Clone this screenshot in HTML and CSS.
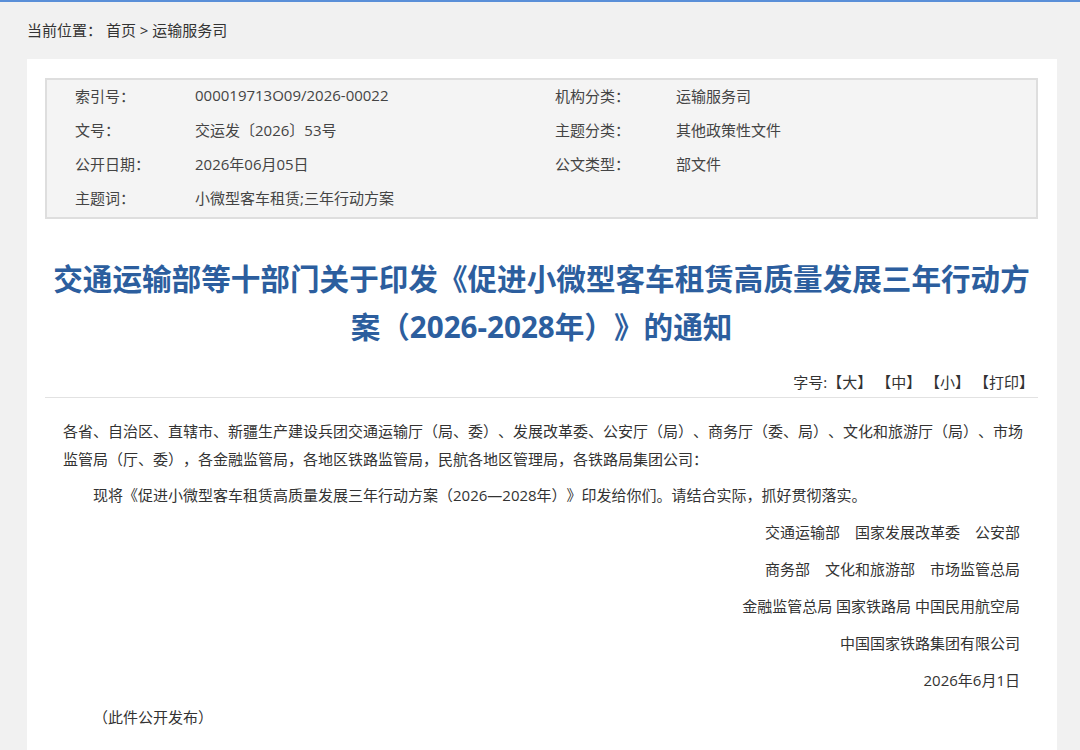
FILE: index.html
```html
<!DOCTYPE html>
<html lang="zh-CN">
  <head>
    <meta charset="UTF-8" />
    <meta name="viewport" content="width=device-width, initial-scale=1.0" />
    <title>交通运输部等十部门关于印发《促进小微型客车租赁高质量发展三年行动方案（2026-2028年）》的通知</title>
    <link rel="stylesheet" href="styles.css">
  </head>
  <body>
    <!-- Breadcrumb -->
    <div class="crumb">
      <span class="crumb-label">当前位置：</span>
      <a href="#">首页</a> &gt; <a href="#">运输服务司</a>
    </div>

    <div class="panel">
      <!-- Document Info Table -->
      <div class="info">
        <div class="info-row">
          <span class="info-label">索引号：</span>
          <span class="info-value">000019713O09/2026-00022</span>
          <span class="info-label">机构分类：</span>
          <span class="info-value">运输服务司</span>
        </div>
        <div class="info-row">
          <span class="info-label">文号：</span>
          <span class="info-value">交运发〔2026〕53号</span>
          <span class="info-label">主题分类：</span>
          <span class="info-value">其他政策性文件</span>
        </div>
        <div class="info-row">
          <span class="info-label">公开日期：</span>
          <span class="info-value">2026年06月05日</span>
          <span class="info-label">公文类型：</span>
          <span class="info-value">部文件</span>
        </div>
        <div class="info-row">
          <span class="info-label">主题词：</span>
          <span class="info-value">小微型客车租赁;三年行动方案</span>
          <span class="info-label"></span>
          <span class="info-value"></span>
        </div>
      </div>

      <!-- Title -->
      <h1 class="doc-title">交通运输部等十部门关于印发《促进小微型客车租赁高质量发展三年行动方案（2026-2028年）》的通知</h1>

      <div class="tools">
        字号:<a href="#">【大】</a> <a href="#">【中】</a> <a href="#">【小】</a> <a href="#">【打印】</a>
      </div>

      <!-- Article Body -->
      <div class="article">
        <p>各省、自治区、直辖市、新疆生产建设兵团交通运输厅（局、委）、发展改革委、公安厅（局）、商务厅（委、局）、文化和旅游厅（局）、市场监管局（厅、委），各金融监管局，各地区铁路监管局，民航各地区管理局，各铁路局集团公司：</p>
        <p class="indent">现将《促进小微型客车租赁高质量发展三年行动方案（2026—2028年）》印发给你们。请结合实际，抓好贯彻落实。</p>

        <div class="signers">
          <p>交通运输部&emsp;国家发展改革委&emsp;公安部</p>
          <p>商务部&emsp;文化和旅游部&emsp;市场监管总局</p>
          <p>金融监管总局 国家铁路局 中国民用航空局</p>
          <p>中国国家铁路集团有限公司</p>
          <p>2026年6月1日</p>
        </div>
        <p class="note">（此件公开发布）</p>
      </div>
    </div>
  </body>
</html>
```

FILE: styles.css
```css
/* Page */
body {
  margin: 0;
  background-color: #f1f1f1;
  border-top: 2px solid #5a8fd8;
  font-family: "Open Sans", "Noto Sans CJK SC", sans-serif;
  font-size: 15px;
  color: #333;
  text-spacing-trim: space-all;
}

a {
  color: inherit;
  text-decoration: none;
}

/* Breadcrumb */
.crumb {
  height: 57px;
  line-height: 56px;
  padding-left: 27px;
  color: #333;
}

/* White content panel */
.panel {
  width: 993px;
  margin-left: 27px;
  padding: 19px 19px 0 18px;
  background-color: #fff;
  min-height: 700px;
}

/* Info table */
.info {
  background-color: #f4f4f4;
  border: 2px solid #dedede;
  padding: 0 0 1px 0;
}

.info-row {
  display: grid;
  grid-template-columns: 120px 360px 121px 1fr;
  box-sizing: border-box;
  height: 34px;
  padding: 0 0 4px 28px;
  align-items: center;
  color: #444;
}

/* Title */
.doc-title {
  margin: 36px 0 0 0;
  font-size: 29.6px;
  line-height: 48px;
  font-weight: bold;
  text-align: center;
  color: #2c5e9e;
}

.tools {
  margin-top: 17px;
  padding-right: 4px;
  line-height: 28px;
  text-align: right;
  border-bottom: 1px solid #e2e2e2;
  padding-bottom: 1px;
}

/* Article */
.article {
  padding: 19px 6px 40px 18px;
  line-height: 28px;
}

.article p {
  margin: 0;
}

.indent {
  margin-top: 8px !important;
  text-indent: 2em;
}

.signers {
  margin-top: 5px;
  padding-right: 12px;
  text-align: right;
}

.signers p {
  line-height: 37px;
}

.note {
  line-height: 37px;
  text-indent: 2em;
}
```
